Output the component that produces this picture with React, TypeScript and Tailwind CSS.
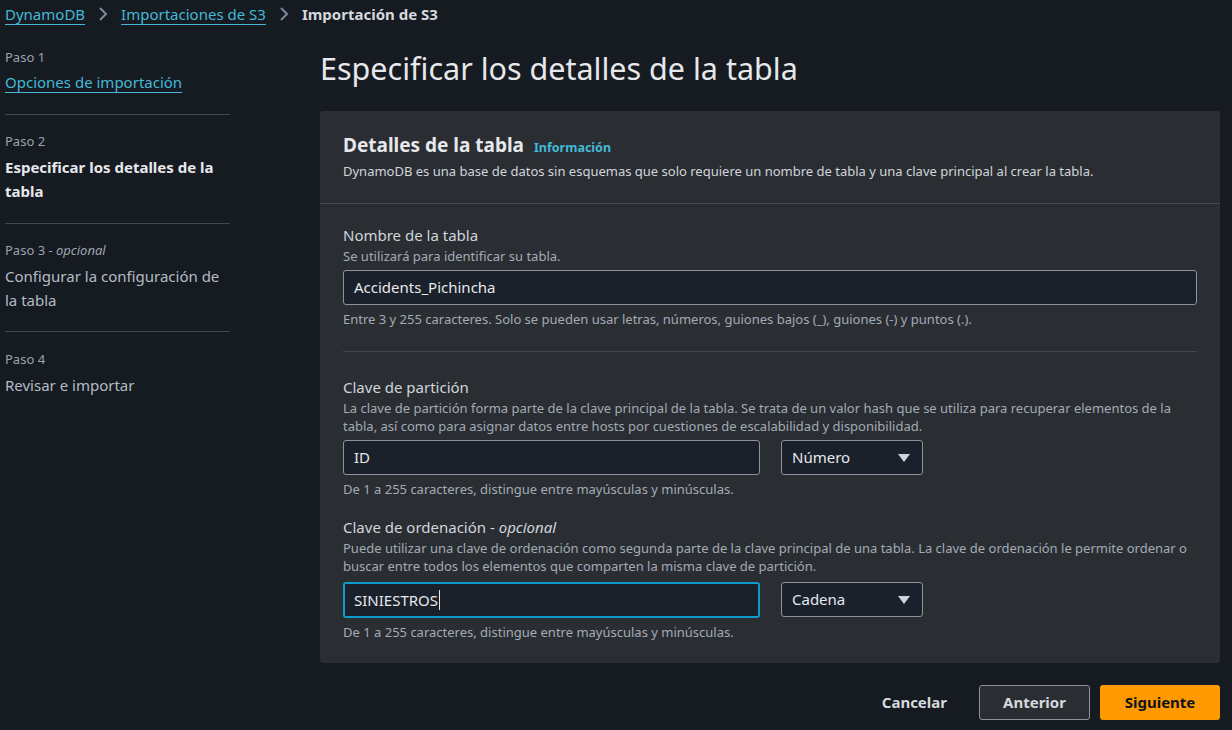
import React from "react";

const font = { fontFamily: '"Noto Sans", "Open Sans", sans-serif' };

function Chevron() {
  return (
    <svg width="14" height="18" viewBox="0 0 14 18" className="mx-[11px]">
      <path d="M4 3 L10 9 L4 15" fill="none" stroke="#7d8998" strokeWidth="2" />
    </svg>
  );
}

function Caret() {
  return (
    <svg width="14" height="10" viewBox="0 0 14 10">
      <path d="M1 1 L13 1 L7 9 Z" fill="#d1d5db" />
    </svg>
  );
}

function Field({
  label,
  optional,
  desc,
  value,
  help,
  select,
  focused,
}: {
  label: string;
  optional?: boolean;
  desc: React.ReactNode;
  value: string;
  help: string;
  select?: string;
  focused?: boolean;
}) {
  return (
    <div className="flex flex-col">
      <div className="text-[15px] leading-[20px] text-[#d1d5db]">
        {label}
        {optional && (
          <>
            {" - "}
            <i>opcional</i>
          </>
        )}
      </div>
      <div className="mt-[2px] text-[13px] leading-[18px] text-[#a3abb5]">{desc}</div>
      <div className={focused ? "mt-[7px] flex gap-[21px]" : "mt-[5px] flex gap-[21px]"}>
        <div
          className={
            select
              ? focused
                ? "flex h-[36px] w-[417px] items-center rounded-[3px] border-2 border-[#0a9dcc] bg-[#1b212a] px-[9px] text-[15px] text-[#e6e8eb]"
                : "flex h-[35px] w-[417px] items-center rounded-[3px] border border-[#8d939a] bg-[#1b212a] px-[10px] text-[15px] text-[#e6e8eb]"
              : "flex h-[35px] w-full items-center rounded-[3px] border border-[#8d939a] bg-[#1b212a] px-[10px] text-[15px] text-[#e6e8eb]"
          }
        >
          {value}
          {focused && <span className="ml-[1px] inline-block h-[20px] w-[1px] bg-[#e6e8eb]" />}
        </div>
        {select && (
          <div className="flex h-[35px] w-[142px] items-center justify-between rounded-[3px] border border-[#8d939a] bg-[#1b212a] pl-[10px] pr-[11px] text-[15px] text-[#e6e8eb]">
            <span>{select}</span>
            <Caret />
          </div>
        )}
      </div>
      <div className="mt-[5px] text-[13px] leading-[18px] text-[#a3abb5]">{help}</div>
    </div>
  );
}

export default function App() {
  return (
    <div className="h-[730px] w-[1232px] overflow-hidden bg-[#161a21] text-[#d1d5db]" style={font}>
      {/* breadcrumb */}
      <div className="flex h-[28px] items-center pl-[5px] text-[15px]">
        <span className="text-[#44b9d6] underline decoration-1 underline-offset-[4px]">DynamoDB</span>
        <Chevron />
        <span className="text-[#44b9d6] underline decoration-1 underline-offset-[4px]">Importaciones de S3</span>
        <Chevron />
        <span className="font-bold text-[#d5d9de]">Importación de S3</span>
      </div>

      <div className="flex">
        {/* sidebar */}
        <div className="ml-[5px] w-[225px] shrink-0 pt-[18px]">
          <div className="border-b border-[#414750] pb-[21px]">
            <div className="text-[13px] leading-[22px] text-[#9ba4ae]">Paso 1</div>
            <div className="mt-[3px] text-[15px] leading-[22px] text-[#44b9d6] underline decoration-1 underline-offset-[4px]">
              Opciones de importación
            </div>
          </div>
          <div className="border-b border-[#414750] pb-[20px] pt-[15px]">
            <div className="text-[13px] leading-[22px] text-[#9ba4ae]">Paso 2</div>
            <div className="mt-[3px] text-[15px] font-bold leading-[24px] text-[#e6e8eb]">
              Especificar los detalles de la
              <br />
              tabla
            </div>
          </div>
          <div className="border-b border-[#414750] pb-[19px] pt-[15px]">
            <div className="text-[13px] leading-[22px] text-[#9ba4ae]">
              Paso 3 - <i>opcional</i>
            </div>
            <div className="mt-[3px] text-[15px] leading-[24px] text-[#b4bcc6]">
              Configurar la configuración de
              <br />
              la tabla
            </div>
          </div>
          <div className="pt-[16px]">
            <div className="text-[13px] leading-[22px] text-[#9ba4ae]">Paso 4</div>
            <div className="mt-[3px] text-[15px] leading-[24px] text-[#b4bcc6]">Revisar e importar</div>
          </div>
        </div>

        {/* main */}
        <div className="ml-[90px] flex w-[900px] flex-col">
          <h1 className="mt-[20px] text-[30.5px] leading-[40px] text-[#e6e8eb]">
            Especificar los detalles de la tabla
          </h1>

          <div className="mt-[23px] overflow-hidden rounded-[3px] bg-[#2a2e33]">
            <div className="border-b border-[#424850] px-[23px] pb-[23px] pt-[21px]">
              <div className="flex items-baseline gap-[10px]">
                <span className="text-[19px] font-bold leading-[26px] text-[#e6e8eb]">Detalles de la tabla</span>
                <span className="text-[12.5px] font-bold text-[#44b9d6]">Información</span>
              </div>
              <div className="mt-[4px] text-[13px] leading-[18px] text-[#d1d5db]">
                DynamoDB es una base de datos sin esquemas que solo requiere un nombre de tabla y una clave principal al crear la tabla.
              </div>
            </div>

            <div className="px-[23px] pb-[22px] pt-[21px]">
              <div className="border-b border-[#414750] pb-[23px]">
                <div className="w-[854px]">
                  <Field
                    label="Nombre de la tabla"
                    desc="Se utilizará para identificar su tabla."
                    value="Accidents_Pichincha"
                    help="Entre 3 y 255 caracteres. Solo se pueden usar letras, números, guiones bajos (_), guiones (-) y puntos (.)."
                  />
                </div>
              </div>
              <div className="pt-[25px]">
                <Field
                  label="Clave de partición"
                  desc={
                    <>
                      La clave de partición forma parte de la clave principal de la tabla. Se trata de un valor hash que se utiliza para recuperar elementos de la
                      <br />
                      tabla, así como para asignar datos entre hosts por cuestiones de escalabilidad y disponibilidad.
                    </>
                  }
                  value="ID"
                  select="Número"
                  help="De 1 a 255 caracteres, distingue entre mayúsculas y minúsculas."
                />
              </div>
              <div className="pt-[19px]">
                <Field
                  label="Clave de ordenación"
                  optional
                  desc={
                    <>
                      Puede utilizar una clave de ordenación como segunda parte de la clave principal de una tabla. La clave de ordenación le permite ordenar o
                      <br />
                      buscar entre todos los elementos que comparten la misma clave de partición.
                    </>
                  }
                  value="SINIESTROS"
                  select="Cadena"
                  focused
                  help="De 1 a 255 caracteres, distingue entre mayúsculas y minúsculas."
                />
              </div>
            </div>
          </div>

          <div className="mt-[22px] flex items-center justify-end gap-[10px]">
            <button className="mr-[22px] text-[15px] font-bold text-[#d5d9de]">Cancelar</button>
            <button className="h-[35px] w-[111px] rounded-[3px] border border-[#8d939a] bg-[#2a2e33] text-[15px] font-bold text-[#d5d9de]">
              Anterior
            </button>
            <button className="h-[35px] w-[120px] rounded-[3px] bg-[#ff9900] text-[15px] font-bold text-[#0f141a]">
              Siguiente
            </button>
          </div>
        </div>
      </div>
    </div>
  );
}
